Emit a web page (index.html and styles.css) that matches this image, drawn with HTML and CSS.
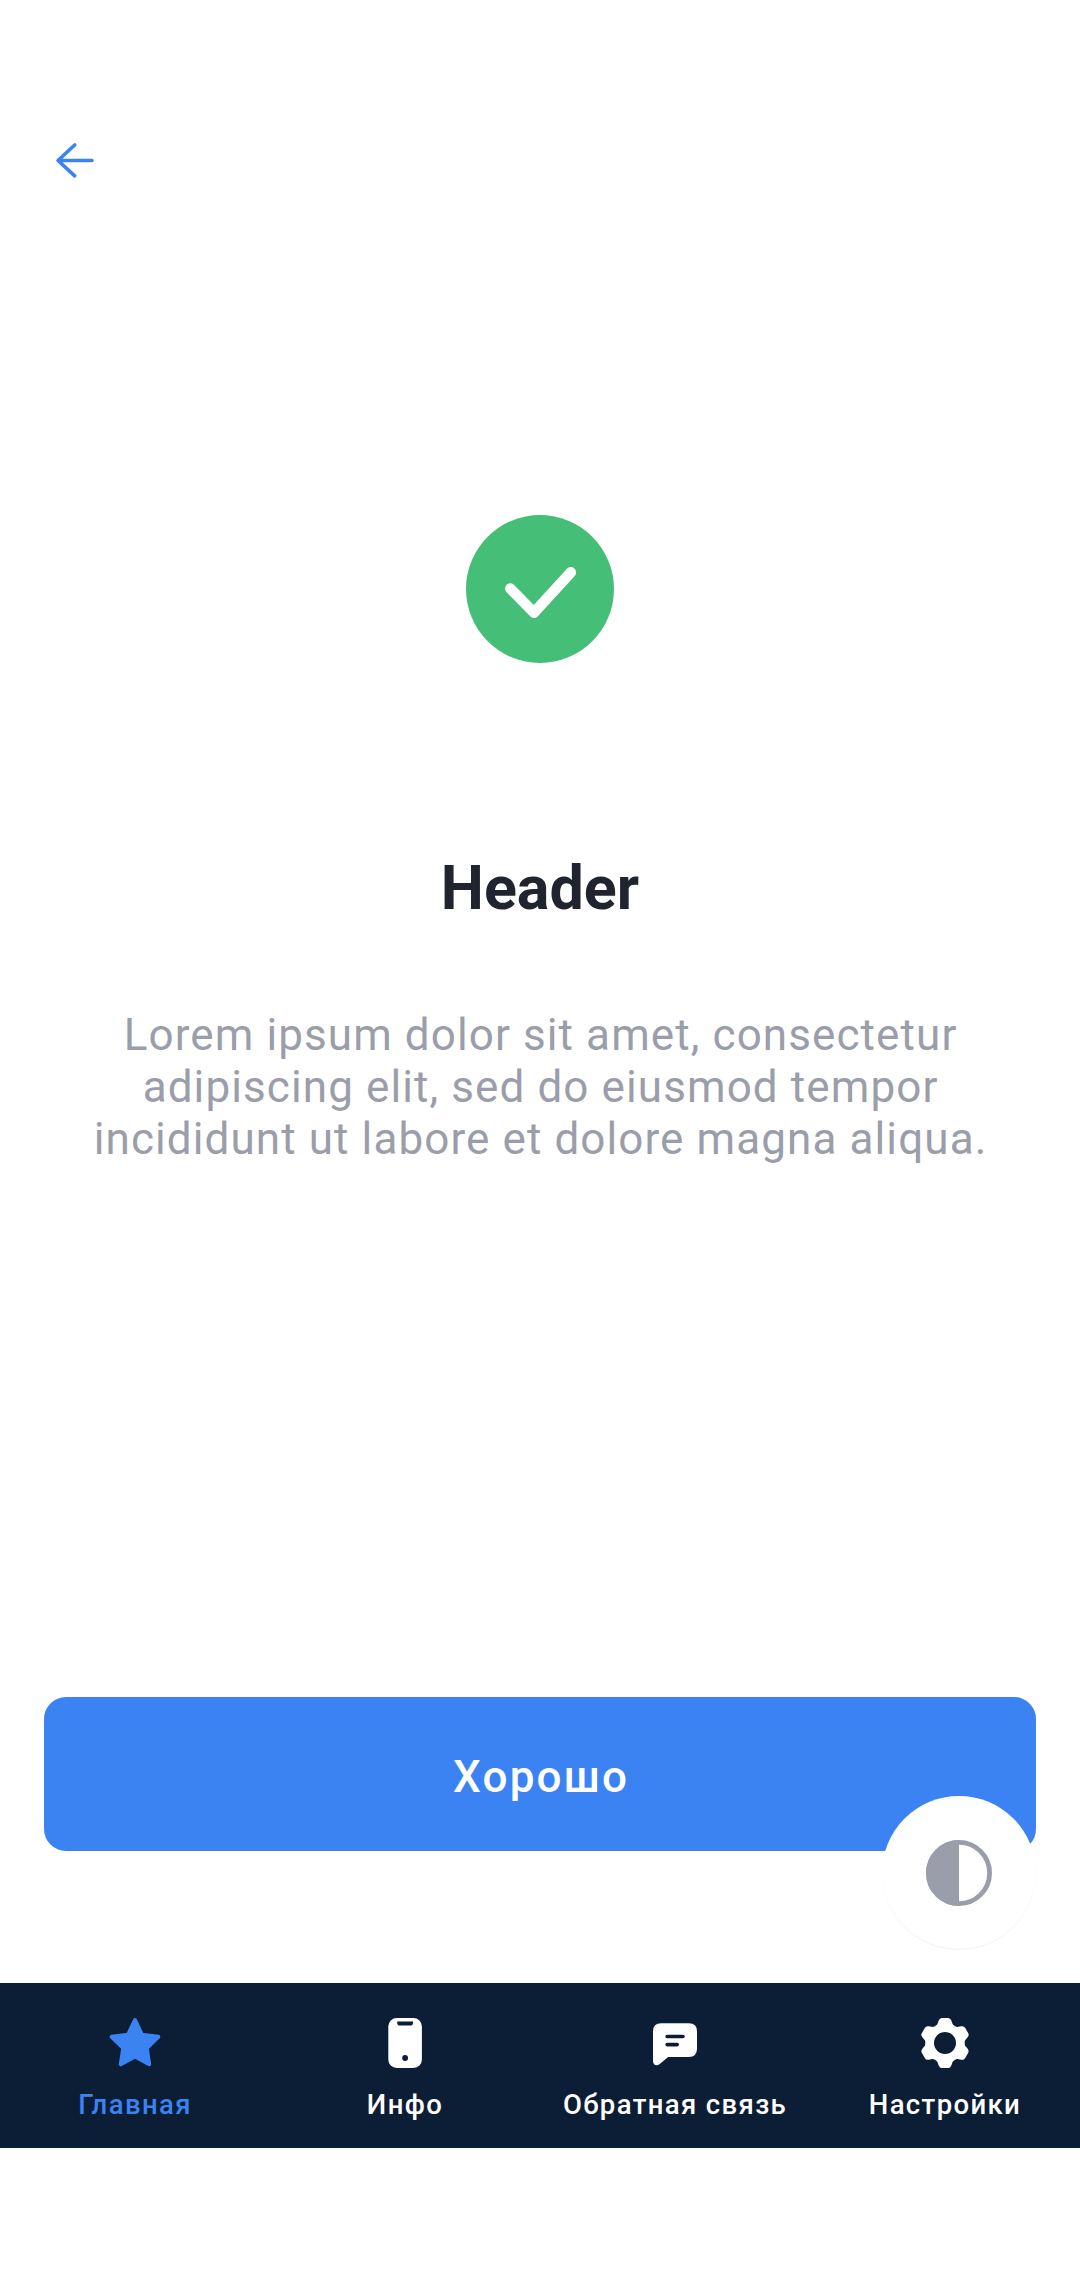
FILE: index.html
```html
<!DOCTYPE html>
<html lang="ru">
<head>
<meta charset="utf-8">
<title>Header</title>
<link rel="stylesheet" href="styles.css">
</head>
<body>
<div class="screen">
  <header class="toolbar">
    <svg class="back" viewBox="0 0 66 66" aria-label="Назад"><path d="M32.7 18 16 33.5 32.7 48.8M16.5 33.5H50"/></svg>
  </header>
  <main class="result">
    <svg class="success" viewBox="0 0 148 148"><circle cx="74" cy="74" r="74"/><path d="M44.4 73.6 68 97.6 104.8 57.4"/></svg>
    <h1 class="title">Header</h1>
    <p class="message">Lorem ipsum dolor sit amet, consectetur<br>adipiscing elit, sed do eiusmod tempor<br>incididunt ut labore et dolore magna aliqua.</p>
  </main>
  <div class="actions">
    <button class="primary">Хорошо</button>
    <div class="fab">
      <svg class="contrast" viewBox="0 0 66 66"><circle cx="33" cy="33" r="30.6"/><path d="M33 0A33 33 0 0 0 33 66Z"/></svg>
    </div>
  </div>
  <nav class="tabs">
    <a class="tab active">
      <svg class="icon" viewBox="0 0 66 66"><path stroke="currentColor" stroke-width="4" stroke-linejoin="round" d="M33 10 40 24.8 56.3 26.8 44.8 38.2 47.2 54.3 33 46.6 18.8 54.3 21.2 38.2 9.7 26.8 26 24.8Z"/></svg>
      <span>Главная</span>
    </a>
    <a class="tab">
      <svg class="icon" viewBox="0 0 66 66"><rect x="16.3" y="8" width="33.6" height="50" rx="8.5"/><path class="cut" d="M25.2 11.5H41V12.7Q41 15.6 38 15.6H28.2Q25.2 15.6 25.2 12.7Z"/><circle class="cut" cx="33.1" cy="48" r="2.9"/></svg>
      <span>Инфо</span>
    </a>
    <a class="tab">
      <svg class="icon" viewBox="0 0 66 66"><path d="M19.2 13.3H46.8Q55 13.3 55 21.5V38.7Q55 46.9 46.8 46.9H26.2L17.4 54.2C14.5 56.5 11 54.6 11 51.2V21.5Q11 13.3 19.2 13.3Z"/><path class="lines" d="M25.1 26.5H41M25.1 34.6H35.2"/></svg>
      <span>Обратная связь</span>
    </a>
    <a class="tab">
      <svg class="icon" viewBox="-33 -33 66 66">
        <defs><path id="tooth" d="M0 0-9.85-17.05C-8.2-18-7.6-18.8-7.3-19.8L-6.3-22.5Q-5.4-25-3.2-25H3.2Q5.4-25 6.3-22.5L7.3-19.8C7.6-18.8 8.2-18 9.85-17.05Z"/></defs>
        <circle r="19"/><use href="#tooth"/><use href="#tooth" transform="rotate(60)"/><use href="#tooth" transform="rotate(120)"/><use href="#tooth" transform="rotate(180)"/><use href="#tooth" transform="rotate(240)"/><use href="#tooth" transform="rotate(300)"/>
        <circle class="cut" r="11"/>
      </svg>
      <span>Настройки</span>
    </a>
  </nav>
</div>
</body>
</html>
```
FILE: styles.css
```css
* { box-sizing: border-box; }
body { margin: 0; background: #fff; font-family: Roboto, "Noto Sans", sans-serif; }
svg { display: block; }
.screen { width: 1080px; height: 2280px; display: flex; flex-direction: column; padding-bottom: 132px; }

.toolbar { height: 237px; padding: 127px 42px 0; }
.back { width: 66px; height: 66px; fill: none; stroke: #3b83f2; stroke-width: 3.6; stroke-linecap: round; stroke-linejoin: round; }

.result { flex: 1; display: flex; flex-direction: column; align-items: center; padding-top: 278px; text-align: center; }
.success { width: 148px; height: 148px; fill: #45bf78; }
.success path { fill: none; stroke: #fff; stroke-width: 10.6; stroke-linecap: round; stroke-linejoin: round; }
.title { margin: 190px 0 0; font-size: 61px; line-height: 71px; font-weight: 700; color: #20242f; }
.message { margin: 85px 0 0; padding-left: 1.1px; font-size: 44px; line-height: 52px; letter-spacing: 1.1px; color: #9a9eaa; white-space: nowrap; }

.actions { position: relative; padding: 0 44px 132px; }
.primary { display: block; width: 100%; height: 154px; padding: 6px 0 0 2.2px; border: 0; border-radius: 22px; background: #3b83f2; color: #fff; font: 500 44px/52px Roboto, "Noto Sans", sans-serif; letter-spacing: 2.2px; }
.fab { position: absolute; right: 44px; bottom: 33px; width: 154px; height: 154px; display: flex; align-items: center; justify-content: center; border-radius: 50%; background: #fff; box-shadow: inset 0 -1px 1px rgba(0, 0, 0, .05); }
.contrast { width: 66px; height: 66px; fill: #9a9eaa; }
.contrast circle { fill: none; stroke: #9a9eaa; stroke-width: 4.8; }

.tabs { height: 165px; display: grid; grid-template-columns: repeat(4, 1fr); background: #0c1d36; }
.tab { display: flex; flex-direction: column; align-items: center; padding-top: 27px; color: #fff; font-size: 27.5px; line-height: 32px; font-weight: 500; letter-spacing: 1.375px; white-space: nowrap; }
.tab span { margin-top: 13px; }
.active { color: #3b83f2; }
.icon { width: 66px; height: 66px; fill: currentColor; }
.cut { fill: #0c1d36; }
.lines { fill: none; stroke: #0c1d36; stroke-width: 3.6; stroke-linecap: round; }
```
